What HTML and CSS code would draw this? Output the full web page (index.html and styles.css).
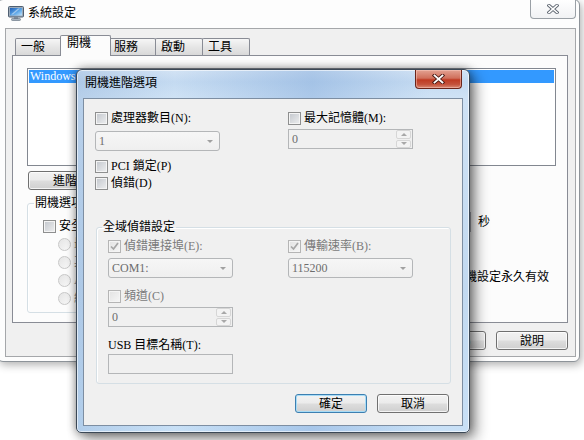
FILE: index.html
```html
<!DOCTYPE html>
<html lang="zh-Hant">
<head>
  <meta charset="UTF-8">
  <title>系統設定</title>
  <link rel="stylesheet" href="styles.css">
</head>
<body>
  <!-- 背景視窗: 系統設定 -->
  <div class="window main-window">
    <div class="titlebar">
      <svg class="app-icon" width="18" height="16" viewBox="0 0 18 16">
        <defs>
          <linearGradient id="scr" x1="0" y1="0" x2="1" y2="1">
            <stop offset="0" stop-color="#1f5fb8"/>
            <stop offset="0.55" stop-color="#5aa4e6"/>
            <stop offset="1" stop-color="#bfe3fb"/>
          </linearGradient>
        </defs>
        <rect x="1.5" y="1.5" width="15" height="10.5" rx="1" fill="#9eabb9" stroke="#4f5f72"/>
        <rect x="3" y="3" width="12" height="7.5" fill="url(#scr)"/>
        <path d="M4 9.5 L11 3.5 L13 3.5 L6 9.5 Z" fill="#ffffff" opacity="0.45"/>
        <rect x="7" y="12" width="4" height="2" fill="#7d8a98"/>
        <rect x="4.5" y="13.5" width="9" height="2" rx="0.8" fill="#a7b3bf" stroke="#5d6b7a" stroke-width="0.6"/>
      </svg>
      <span class="title">系統設定</span>
      <div class="close-btn inactive">
        <svg width="12" height="10" viewBox="0 0 12 10">
          <path d="M2 1.5 L10 8.5 M10 1.5 L2 8.5" stroke="#5e6670" stroke-width="3.4" stroke-linecap="square"/>
          <path d="M2 1.5 L10 8.5 M10 1.5 L2 8.5" stroke="#ffffff" stroke-width="1.6" stroke-linecap="square"/>
        </svg>
      </div>
    </div>
    <div class="client">
      <div class="tabs">
        <div class="tab">一般</div>
        <div class="tab active">開機</div>
        <div class="tab wide">服務</div>
        <div class="tab wide">啟動</div>
        <div class="tab wide">工具</div>
      </div>
      <div class="tab-panel">
        <div class="listbox">
          <div class="list-item selected">Windows 7 (C:\Windows) : 目前的作業系統; 預設作業系統</div>
        </div>
        <button class="btn advanced">進階選項(V)...</button>
        <div class="boot-row">
          <fieldset class="group boot-options">
            <legend>開機選項</legend>
            <label class="check-row safe"><span class="check"></span>安全開機(F)</label>
            <label class="radio-row"><span class="radio"></span>最少(M)</label>
            <label class="radio-row"><span class="radio"></span>其他殼層(L)</label>
            <label class="radio-row"><span class="radio"></span>Active Directory 修復(P)</label>
            <label class="radio-row"><span class="radio"></span>網路(W)</label>
          </fieldset>
          <div class="timeout">
            <div class="timeout-label">逾時:</div>
            <div class="timeout-row">
              <div class="textbox timeout-box">30</div>
              <span class="unit">秒</span>
            </div>
            <label class="check-row permanent"><span class="check"></span>讓所有開機設定永久有效</label>
          </div>
        </div>
      </div>
      <div class="button-row">
        <button class="btn">確定</button>
        <button class="btn">取消</button>
        <button class="btn">套用(A)</button>
        <button class="btn">說明</button>
      </div>
    </div>
  </div>

  <!-- 前景對話方塊: 開機進階選項 -->
  <div class="window dialog">
    <div class="titlebar">
      <span class="title">開機進階選項</span>
      <div class="close-btn active">
        <svg width="13" height="10" viewBox="0 0 13 10">
          <path d="M2.5 1.5 L10.5 8.5 M10.5 1.5 L2.5 8.5" stroke="#4a1a14" stroke-width="3.6" stroke-linecap="square"/>
          <path d="M2.5 1.5 L10.5 8.5 M10.5 1.5 L2.5 8.5" stroke="#ffffff" stroke-width="1.8" stroke-linecap="square"/>
        </svg>
      </div>
    </div>
    <div class="dlg-client">
      <div class="dlg-grid">
        <div class="col">
          <label class="check-row"><span class="check"></span>處理器數目(N):</label>
          <div class="combo disabled cpu-combo"><span>1</span><span class="arrow"></span></div>
          <label class="check-row pci"><span class="check"></span>PCI 鎖定(P)</label>
          <label class="check-row debug"><span class="check"></span>偵錯(D)</label>
        </div>
        <div class="col">
          <label class="check-row"><span class="check"></span>最大記憶體(M):</label>
          <div class="spin disabled mem-spin">
            <span>0</span>
            <span class="spin-btns"><span class="up"></span><span class="down"></span></span>
          </div>
        </div>
      </div>

      <fieldset class="group debug-group">
        <legend>全域偵錯設定</legend>
        <div class="dbg-grid">
          <div class="col">
            <label class="check-row disabled-text">
              <span class="check disabled">
                <svg width="11" height="11" viewBox="0 0 11 11"><path d="M2 5.5 L4.5 8 L9 2" fill="none" stroke="#a6a6a6" stroke-width="1.7"/></svg>
              </span>偵錯連接埠(E):
            </label>
            <div class="combo disabled"><span>COM1:</span><span class="arrow"></span></div>
            <label class="check-row disabled-text channel"><span class="check disabled"></span>頻道(C)</label>
            <div class="spin disabled channel-spin">
              <span>0</span>
              <span class="spin-btns"><span class="up"></span><span class="down"></span></span>
            </div>
            <div class="usb-label">USB 目標名稱(T):</div>
            <div class="textbox usb-box"></div>
          </div>
          <div class="col">
            <label class="check-row disabled-text">
              <span class="check disabled">
                <svg width="11" height="11" viewBox="0 0 11 11"><path d="M2 5.5 L4.5 8 L9 2" fill="none" stroke="#a6a6a6" stroke-width="1.7"/></svg>
              </span>傳輸速率(B):
            </label>
            <div class="combo disabled"><span>115200</span><span class="arrow"></span></div>
          </div>
        </div>
      </fieldset>

      <div class="dlg-buttons">
        <button class="btn default">確定</button>
        <button class="btn">取消</button>
      </div>
    </div>
  </div>
</body>
</html>
```

FILE: styles.css
```css
* {
  box-sizing: border-box;
}
body {
  margin: 0;
  width: 584px;
  height: 440px;
  position: relative;
  overflow: hidden;
  background-color: #ffffff;
  font-family: "Liberation Serif", "Noto Sans CJK TC", serif;
  font-size: 12px;
  line-height: 14px;
  color: #000000;
}

/* 視窗外框 */
.window {
  position: absolute;
  display: flex;
  flex-direction: column;
}
.titlebar {
  display: flex;
  align-items: flex-start;
  height: 28px;
  flex: none;
}
.title {
  margin-top: 6px;
  white-space: nowrap;
}
.close-btn {
  margin-left: auto;
  width: 46px;
  height: 19px;
  display: flex;
  align-items: center;
  justify-content: center;
  border-radius: 0 0 4px 4px;
}
.close-btn.inactive {
  border: 1px solid #9aa0a6;
  border-top: none;
  background: linear-gradient(#ffffff, #f1f2f4);
}
.close-btn.active {
  width: 47px;
  border: 1px solid #6b2419;
  border-top: none;
  background: linear-gradient(#e3a292 0%, #d0705c 45%, #bf3a22 55%, #c4523b 80%, #d98a75 100%);
  box-shadow: inset 0 0 0 1px rgba(255, 210, 200, 0.45);
}

/* 背景視窗 */
.main-window {
  left: -3px;
  top: -1px;
  width: 583px;
  height: 363px;
  border: 1px solid #8d9399;
  border-radius: 6px;
  background-color: #fdfdfd;
  padding: 0 3px 4px 7px;
  box-shadow: 2px 3px 8px rgba(0, 0, 0, 0.3);
}
.main-window .titlebar {
  margin: 0 -3px 0 -7px;
  padding-left: 9px;
}
.app-icon {
  margin-top: 5px;
  margin-right: 3px;
}
.main-window .close-btn {
  margin-right: 3px;
}
.client {
  flex: 1;
  border: 1px solid #a5a7aa;
  background-color: #f0f0f0;
  display: flex;
  flex-direction: column;
}

/* 索引標籤 */
.tabs {
  display: flex;
  align-items: flex-end;
  height: 20px;
  margin: 6px 0 0 9px;
}
.tab {
  width: 47px;
  height: 17px;
  padding: 1px 0 0 5px;
  border: 1px solid #898c95;
  border-bottom: none;
  border-radius: 2px 2px 0 0;
  background: linear-gradient(#f6f6f6, #e6e6e6 50%, #d9d9d9);
}
.tab + .tab {
  margin-left: -1px;
}
.tab.wide {
  width: 48px;
}
.tab.active {
  position: relative;
  z-index: 1;
  width: 51px;
  height: 21px;
  margin: 0 -2px -1px -2px;
  padding: 0 0 0 6px;
  background: #fcfcfc;
}
.tab-panel {
  width: 556px;
  height: 268px;
  margin-left: 6px;
  border: 1px solid #898c95;
  background-color: #fcfcfc;
  padding: 12px 11px 0 14px;
}
.listbox {
  height: 98px;
  border: 1px solid #828790;
  background-color: #ffffff;
  padding: 1px;
}
.list-item {
  height: 13px;
  line-height: 13px;
  padding-left: 1px;
  white-space: nowrap;
  overflow: hidden;
}
.list-item.selected {
  background-color: #3399ff;
  color: #ffffff;
}
.btn {
  width: 72px;
  height: 19px;
  padding: 0;
  font: inherit;
  color: #000000;
  border: 1px solid #707070;
  border-radius: 3px;
  background: linear-gradient(#f2f2f2 0%, #ebebeb 48%, #dddddd 52%, #cfcfcf 100%);
  box-shadow: inset 0 0 0 1px rgba(255, 255, 255, 0.75);
}
.btn.default {
  border-color: #3c7fb1;
  box-shadow: inset 0 0 0 1px #a8dcf6;
}
.btn.advanced {
  display: block;
  width: 110px;
  margin: 5px 0 0 1px;
  padding-left: 24px;
  text-align: left;
}
.boot-row {
  display: flex;
  align-items: flex-start;
  margin-top: 6px;
}
.group {
  margin: 0;
  padding: 0;
  border: 1px solid #d5dfe5;
  border-radius: 3px;
  box-shadow: inset 1px 1px 0 #ffffff;
}
.group legend {
  margin-left: 6px;
  padding: 0 1px;
  line-height: 14px;
}
.boot-options {
  width: 365px;
  height: 117px;
  display: flex;
  flex-direction: column;
}
.check-row,
.radio-row {
  display: flex;
  align-items: center;
  height: 13px;
  line-height: 13px;
  white-space: nowrap;
}
.check {
  width: 13px;
  height: 13px;
  flex: none;
  margin-right: 3px;
  border: 1px solid #8e8f8f;
  background: linear-gradient(135deg, #c2c6cc, #eeeff0);
  box-shadow: inset 0 0 0 1px #f4f4f4;
  display: flex;
  align-items: center;
  justify-content: center;
}
.check.disabled {
  border-color: #b5b5b5;
  background: linear-gradient(135deg, #e2e2e2, #f6f6f6);
}
.disabled-text {
  color: #7a7a7a;
}
.radio {
  width: 13px;
  height: 13px;
  flex: none;
  margin-right: 3px;
  border: 1px solid #c8c8c8;
  border-radius: 50%;
  background: linear-gradient(135deg, #e4e4e4, #f8f8f8);
}
.safe {
  margin: 10px 0 0 15px;
}
.radio-row {
  margin: 5px 0 0 30px;
  color: #7a7a7a;
}
.timeout {
  margin-left: 9px;
  display: flex;
  flex-direction: column;
}
.timeout-row {
  display: flex;
  align-items: center;
  margin-top: 2px;
}
.textbox {
  height: 20px;
  border: 1px solid #abadb3;
  background-color: #ffffff;
  padding-left: 3px;
  line-height: 18px;
}
.timeout-box {
  width: 60px;
  margin-left: 10px;
}
.unit {
  margin-left: 7px;
}
.permanent {
  margin-top: 39px;
}

/* 下方按鈕 */
.button-row {
  display: flex;
  justify-content: flex-end;
  gap: 10px;
  margin: 8px 7px 0 0;
}

/* 對話方塊 */
.dialog {
  left: 76px;
  top: 69px;
  width: 394px;
  height: 364px;
  border: 1px solid #3b4856;
  border-radius: 6px 6px 5px 5px;
  padding: 0 6px 6px 6px;
  background:
    linear-gradient(90deg, rgba(110, 150, 200, 0.25), rgba(255, 255, 255, 0) 25%, rgba(90, 140, 205, 0.3) 60%, rgba(255, 255, 255, 0) 90%),
    linear-gradient(#d3e3f4, #c4daf1 12px, #cfe2f5 28px, #c2d9f0 60%, #c8e0f6);
  box-shadow:
    inset 0 0 0 1px rgba(255, 255, 255, 0.6),
    0 0 10px rgba(0, 0, 0, 0.45),
    6px 6px 14px rgba(0, 0, 0, 0.4);
}
.dialog .titlebar {
  margin: 0 -6px;
  padding-left: 8px;
}
.dialog .title {
  margin-top: 6px;
}
.dialog .close-btn {
  margin-right: 7px;
}
.dlg-client {
  flex: 1;
  border: 1px solid #7d8ea2;
  background-color: #f0f0f0;
  padding: 13px 0 0 11px;
  display: flex;
  flex-direction: column;
}
.dlg-grid {
  display: grid;
  grid-template-columns: 193px 1fr;
}
.col {
  display: flex;
  flex-direction: column;
  align-items: flex-start;
}
.combo {
  width: 125px;
  height: 20px;
  border: 1px solid #b4b6b8;
  border-radius: 3px;
  background: linear-gradient(#f6f6f6, #efefef);
  display: flex;
  align-items: center;
  padding-left: 3px;
  color: #6d6d6d;
}
.combo .arrow {
  margin-left: auto;
  margin-right: 6px;
  border-left: 3px solid transparent;
  border-right: 3px solid transparent;
  border-top: 3px solid #a0a0a0;
}
.cpu-combo {
  margin-top: 6px;
}
.pci {
  margin-top: 9px;
}
.debug {
  margin-top: 4px;
}
.spin {
  width: 125px;
  height: 20px;
  border: 1px solid #b4b6b8;
  background-color: #f0f0f0;
  display: flex;
  align-items: center;
  padding-left: 3px;
  color: #6d6d6d;
}
.spin-btns {
  margin-left: auto;
  width: 16px;
  height: 18px;
  display: flex;
  flex-direction: column;
  gap: 1px;
  padding: 0 1px 0 0;
}
.spin-btns span {
  flex: 1;
  border: 1px solid #d6d6d6;
  border-radius: 2px;
  background: #f3f3f3;
  display: flex;
  align-items: center;
  justify-content: center;
}
.spin-btns .up::after,
.spin-btns .down::after {
  content: "";
  border-left: 3px solid transparent;
  border-right: 3px solid transparent;
}
.spin-btns .up::after {
  border-bottom: 3px solid #a8a8a8;
}
.spin-btns .down::after {
  border-top: 3px solid #a8a8a8;
}
.mem-spin {
  margin-top: 4px;
}
.debug-group {
  width: 355px;
  margin: 30px 0 0 1px;
  padding: 6px 0 9px 0;
}
.debug-group legend {
  margin-left: 5px;
}
.dbg-grid {
  display: grid;
  grid-template-columns: 180px 1fr;
  margin-left: 11px;
}
.dbg-grid .combo {
  margin-top: 5px;
}
.channel {
  margin-top: 12px;
}
.channel-spin {
  margin-top: 4px;
}
.usb-label {
  margin-top: 11px;
  white-space: nowrap;
}
.usb-box {
  width: 125px;
  margin-top: 2px;
  border-color: #b4b6b8;
  background-color: #f0f0f0;
}
.dlg-buttons {
  display: flex;
  justify-content: flex-end;
  gap: 10px;
  margin: 10px 13px 0 0;
}
```
